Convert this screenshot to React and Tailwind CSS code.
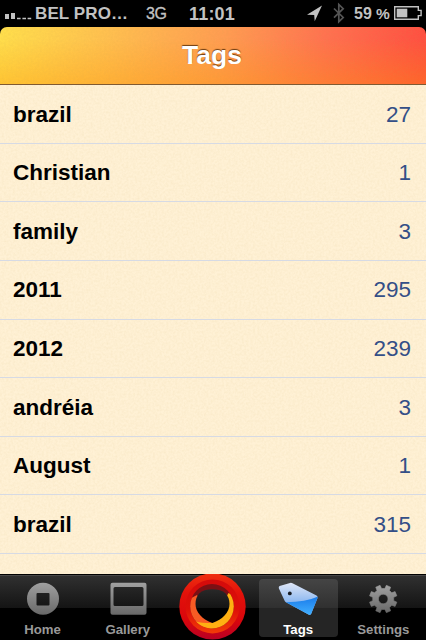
import React from "react";

const tags = [
  ["brazil", "27"],
  ["Christian", "1"],
  ["family", "3"],
  ["2011", "295"],
  ["2012", "239"],
  ["andréia", "3"],
  ["August", "1"],
  ["brazil", "315"],
];

function Grain({ id, opacity }) {
  return (
    <svg className="pointer-events-none absolute inset-0 h-full w-full" style={{ opacity }} aria-hidden="true">
      <filter id={id} x="0" y="0" width="100%" height="100%">
        <feTurbulence type="fractalNoise" baseFrequency="0.45" numOctaves="2" seed="4" />
        <feColorMatrix values="0 0 0 0 0.55  0 0 0 0 0.35  0 0 0 0 0.08  1.4 0 0 0 -0.45" />
      </filter>
      <rect width="100%" height="100%" filter={`url(#${id})`} />
    </svg>
  );
}

function StatusBar() {
  return (
    <div className="flex h-[27px] shrink-0 items-center bg-black font-bold leading-none text-[#c2c2c2]">
      <svg className="ml-[5px] h-[27px] w-[27px] shrink-0" viewBox="0 0 27 27" fill="#c2c2c2">
        <path d="M0 14h4v5H0zM6 13h4v6H6zM12 17.7h3.6v1.6H12zM17.4 17.7H21v1.6h-3.6zM22.6 17.7h3.6v1.6h-3.6z" />
      </svg>
      <span className="ml-[3px] w-[111px] whitespace-nowrap text-[17px] tracking-[0.1px]">BEL PRO…</span>
      <span className="w-[43px] text-[16px] font-normal tracking-[-0.3px] [-webkit-text-stroke:0.3px_#c2c2c2]">3G</span>
      <span className="w-[117px] text-[18px] tracking-[0.2px]">11:01</span>
      <svg className="h-[27px] w-[45px] shrink-0" viewBox="306 0 45 27">
        <path d="M322 5.5L307 14.7l7.2.4.5 6.2z" fill="#c2c2c2" />
        <path d="M334 8.5l9.2 9-4.4 4.2V4.5l4.4 4.2-9.2 9" fill="none" stroke="#555" strokeWidth="1.7" />
      </svg>
      <span className="ml-[3px] w-[22px] text-[16px]">59</span>
      <span className="w-[18px] text-[15.5px]">%</span>
      <svg className="h-[27px] w-[32px] shrink-0" viewBox="394 0 32 27">
        <path d="M394.7 6.7h23.6v3.7h2.8v5.2h-2.8v3.7h-23.6z" fill="none" stroke="#c2c2c2" strokeWidth="1.4" />
        <path d="M396.7 8.7h10.6v8.6h-10.6z" fill="#c2c2c2" />
      </svg>
    </div>
  );
}

function HomeIcon() {
  return (
    <svg className="h-[36px] w-[40px] shrink-0" viewBox="0 0 40 36">
      <defs>
        <linearGradient id="metal" x1="0" y1="0" x2="0" y2="1">
          <stop stopColor="#a0a0a0" />
          <stop offset="1" stopColor="#686868" />
        </linearGradient>
      </defs>
      <path fillRule="evenodd" fill="url(#metal)" d="M20 2.8a16 16 0 1 1 0 32 16 16 0 1 1 0-32zM14.5 13a1 1 0 0 0-1 1v10.5a1 1 0 0 0 1 1h11a1 1 0 0 0 1-1V14a1 1 0 0 0-1-1z" />
    </svg>
  );
}

function GalleryIcon() {
  return (
    <svg className="h-[36px] w-[40px] shrink-0" viewBox="0 0 40 36">
      <path fillRule="evenodd" fill="url(#metal)" d="M4.5 2.8h32a2 2 0 0 1 2 2v28a2 2 0 0 1-2 2h-32a2 2 0 0 1-2-2v-28a2 2 0 0 1 2-2zM7 7a1.5 1.5 0 0 0-1.5 1.5v16A1.5 1.5 0 0 0 7 26h27a1.5 1.5 0 0 0 1.5-1.5v-16A1.5 1.5 0 0 0 34 7z" />
    </svg>
  );
}

function TagIcon() {
  return (
    <svg className="h-[36px] w-[44px] shrink-0" viewBox="276 580 44 36">
      <defs>
        <linearGradient id="tagLight" x1="0" y1="0" x2="0" y2="1">
          <stop stopColor="#dfe6f6" />
          <stop offset=".65" stopColor="#86b4f0" />
        </linearGradient>
        <linearGradient id="tagBlue" x1="0" y1="0" x2="0" y2="1">
          <stop stopColor="#1a7bea" />
          <stop offset="1" stopColor="#42b0ff" />
        </linearGradient>
      </defs>
      <path d="M279.6 586.1l10.4-3.2q1.3-.4 2.5.3l24 12.4q1.5.9.9 2.6l-6.2 15.6q-.8 1.8-2.7.8l-22.6-12.3q-1-.6-1.4-1.8l-5.6-12q-.6-1.8.7-2.4z" fill="url(#tagLight)" />
      <path d="M317.5 596.8q.2.6-.1 1.4l-6.2 15.6q-.8 1.8-2.7.8l-22.6-12.3Q306 602 317.5 596.8z" fill="url(#tagBlue)" />
      <circle cx="289.8" cy="593.4" r="1.9" fill="#161b24" />
    </svg>
  );
}

const gearTeeth = Array.from({ length: 8 }, (_, i) =>
  [[-13.5, 10.6], [-9.5, 14], [9.5, 14], [13.5, 10.6]]
    .map(([turn, radius]) => {
      const angle = ((22.5 + i * 45 + turn) * Math.PI) / 180;
      return `${(radius * Math.cos(angle)).toFixed(2)} ${(radius * Math.sin(angle)).toFixed(2)}`;
    })
    .join("L")
).join("L");

function GearIcon() {
  return (
    <svg className="h-[36px] w-[40px] shrink-0" viewBox="-20.2 -19 40 36">
      <path
        fill="url(#metal)"
        fillRule="evenodd"
        stroke="url(#metal)"
        strokeWidth="0.6"
        strokeLinejoin="round"
        d={`M${gearTeeth}ZM0-4.8A4.8 4.8 0 1 0 0 4.8 4.8 4.8 0 1 0 0-4.8z`}
      />
    </svg>
  );
}

function Ring() {
  return (
    <svg className="h-[67px] w-[67px]" viewBox="179.5 573 67 67">
      <defs>
        <linearGradient id="ringOuter" x1="0" y1="0" x2="0" y2="1">
          <stop stopColor="#f03010" />
          <stop offset=".3" stopColor="#e3120a" />
          <stop offset=".7" stopColor="#d9060c" />
          <stop offset="1" stopColor="#b80024" />
        </linearGradient>
        <linearGradient id="ringInner" x1="0" y1="0" x2="0" y2="1">
          <stop stopColor="#d40b0b" />
          <stop offset=".55" stopColor="#de0f08" />
          <stop offset="1" stopColor="#f23c08" />
        </linearGradient>
        <linearGradient id="hole" x1="0" y1="589" x2="0" y2="623" gradientUnits="userSpaceOnUse">
          <stop stopColor="#292929" />
          <stop offset=".55" stopColor="#141414" />
          <stop offset=".57" stopColor="#000" />
        </linearGradient>
        <clipPath id="bowl"><ellipse cx="212.5" cy="606.2" rx="21.8" ry="22.2" /></clipPath>
      </defs>
      <circle cx="213" cy="606.4" r="33.2" fill="url(#ringOuter)" />
      <circle cx="213" cy="606.4" r="27" fill="url(#ringInner)" />
      <g clipPath="url(#bowl)">
        <path d="M190 583h46v46h-46z" fill="#7b1014" />
        <path d="M190 599l7.5-4 18 28-4 6h-21.5z" fill="#f85b24" />
        <path d="M229 593l8 4v32h-32l-13-9q9 4 20.7 2.7z" fill="#ffb012" />
      </g>
      <path d="M196 604c0-9 5-14.8 16.8-14.8S230 595 230 604c0 8.500-7 15.500-17.200 18.900-9.800-3.400-16.800-10.400-16.800-18.900z" fill="url(#hole)" />
    </svg>
  );
}

function Tab({ label, active, children }) {
  return (
    <div className="flex h-full w-[85.2px] flex-col items-center pt-[4px]">
      <div className={`flex h-[58px] w-[79px] shrink-0 flex-col items-center rounded-[4px] pt-px ${active ? "bg-[linear-gradient(#454545_0px,#303030_29px,#252525_29px)]" : ""}`}>
        {children}
        <span className={`mt-[5px] shrink-0 text-[13.2px] font-bold leading-[17px] ${active ? "text-white" : "text-[#999]"}`}>{label}</span>
      </div>
    </div>
  );
}

export default function App() {
  return (
    <div className="flex h-[640px] w-[426px] flex-col overflow-hidden bg-black font-['Liberation_Sans',Arial,sans-serif]">
      <StatusBar />
      <header className="relative flex h-[58px] shrink-0 items-center justify-center overflow-hidden rounded-t-[7px] border-b border-[#805a32] bg-[linear-gradient(100deg,#ffdf4c_0%,#ffbc50_28%,#ff9c52_52%,#ff7050_76%,#ff4c40_100%)]">
        <div className="absolute inset-0 bg-[linear-gradient(to_bottom,transparent_20%,#ff960055_100%)]" />
        <Grain id="headerGrain" opacity={0.12} />
        <h1 className="relative right-px pb-px text-[26.5px] font-bold leading-none text-white [text-shadow:0_-1px_1px_#6b3c13]">Tags</h1>
      </header>
      <main className="relative h-[489px] shrink-0 overflow-hidden bg-[#fff1d5]">
        <Grain id="paperGrain" opacity={0.1} />
        <ul className="relative">
          {tags.map(([name, count], i) => (
            <li key={i} className="flex h-[58.65px] items-center justify-between border-b border-[#d6dae4] pl-[13px] pr-[15px] pt-[2px] text-[22.5px] leading-none">
              <span className="font-bold text-black">{name}</span>
              <span className="text-[#344f87]">{count}</span>
            </li>
          ))}
        </ul>
      </main>
      <nav className="flex h-[66px] shrink-0 border-t border-black bg-[linear-gradient(#484848_0px,#484848_1px,#303030_1px,#141414_33px,#000_33px)]">
        <Tab label="Home"><HomeIcon /></Tab>
        <Tab label="Gallery"><GalleryIcon /></Tab>
        <div className="-mt-[2px] flex w-[85.2px] shrink-0 justify-center"><Ring /></div>
        <Tab label="Tags" active><TagIcon /></Tab>
        <Tab label="Settings"><GearIcon /></Tab>
      </nav>
    </div>
  );
}
